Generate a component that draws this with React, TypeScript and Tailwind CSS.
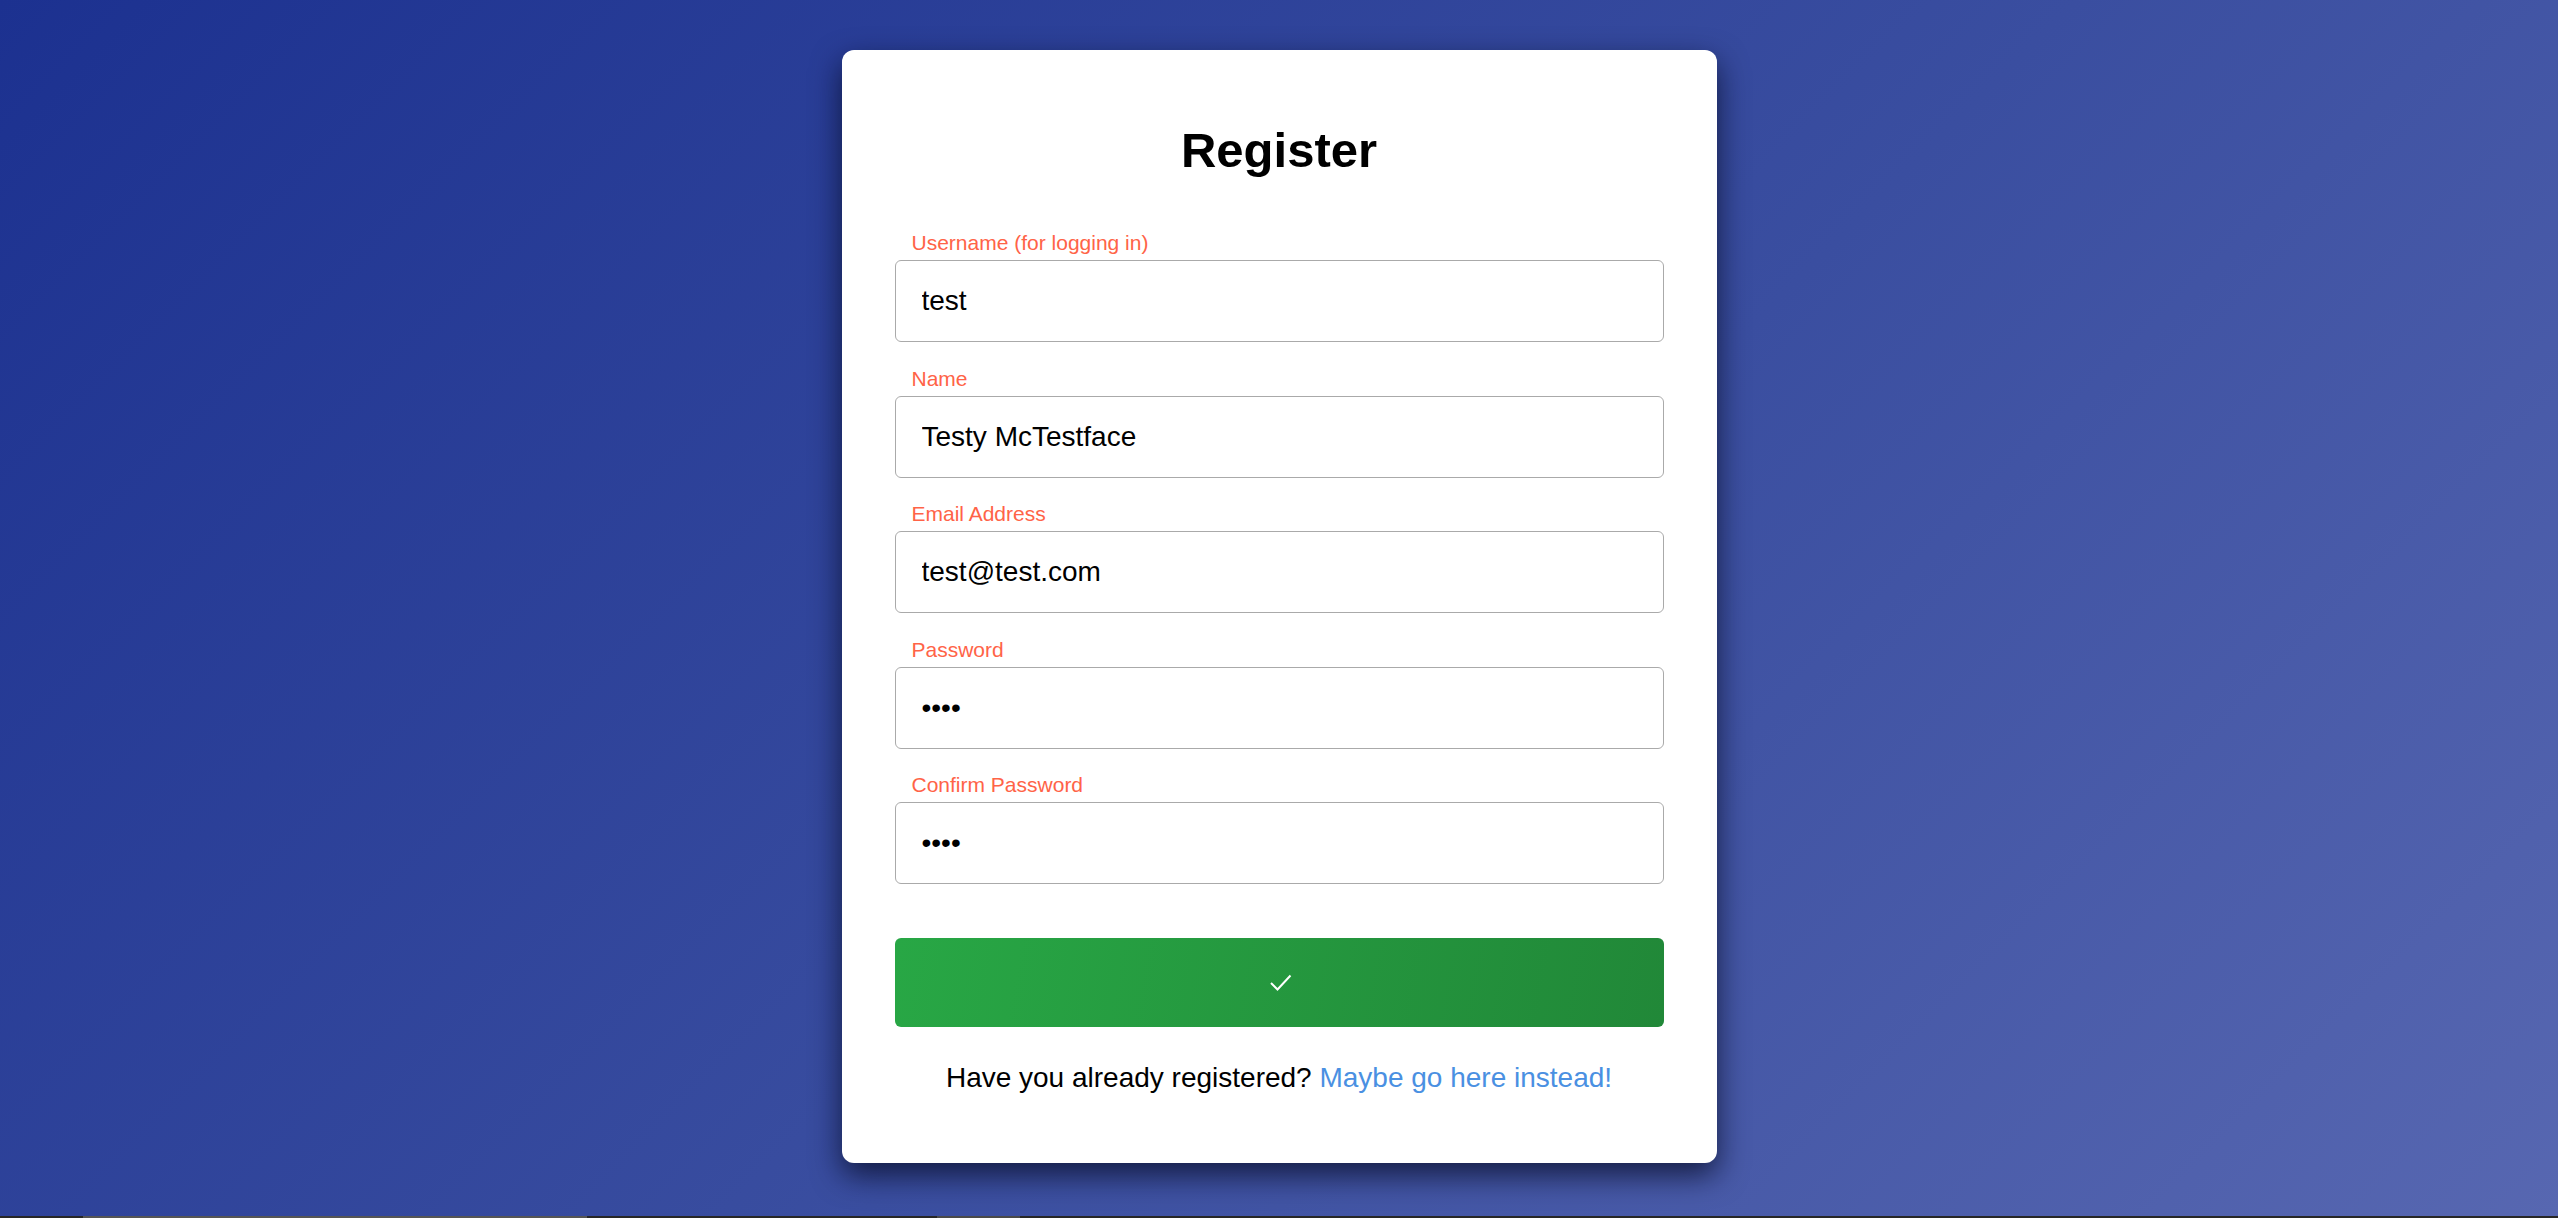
const fields = [
  { label: 'Username (for logging in)', type: 'text', value: 'test' },
  { label: 'Name', type: 'text', value: 'Testy McTestface' },
  { label: 'Email Address', type: 'email', value: 'test@test.com' },
  { label: 'Password', type: 'password', value: 'test' },
  { label: 'Confirm Password', type: 'password', value: 'test' },
];

export default function App() {
  return (
    <div className="h-[1218px] w-full flex flex-col items-center bg-[linear-gradient(135deg,#1c3190_0%,#3a4ea0_55%,#5767b1_100%)] font-['Liberation_Sans',Arial,sans-serif] overflow-hidden">
      <div className="mt-[50px] w-[875px] h-[1113px] bg-white rounded-[12px] shadow-[0_12px_30px_rgba(5,10,35,0.75)] px-[53px] pt-[72px]">
        <h1 className="text-[49px] leading-[56px] font-bold text-center text-black">Register</h1>

        <form className="mt-[53px] flex flex-col gap-[24.5px]" onSubmit={(e) => e.preventDefault()}>
          {fields.map((f) => (
            <div key={f.label} className="flex flex-col">
              <label className="pl-[17px] text-[21px] leading-[24px] text-[#ff6347]">{f.label}</label>
              <input
                type={f.type}
                defaultValue={f.value}
                className="mt-[5px] w-full h-[82px] border border-[#aaaaaa] rounded-[6px] px-[26px] text-[28px] text-black bg-white outline-none"
              />
            </div>
          ))}
        </form>

        <button
          type="button"
          className="mt-[54px] w-full h-[89px] rounded-[6px] bg-[linear-gradient(100deg,#28a745,#218838)] flex items-center justify-center"
        >
          <svg width="24" height="20" viewBox="0 0 24 20" fill="none" className="ml-[4px]">
            <polyline points="2,10 8.5,16.5 21.5,2.5" stroke="white" strokeWidth="2" />
          </svg>
        </button>

        <p className="mt-[35px] text-center text-[28px] leading-[32px] text-black">
          Have you already registered?{' '}
          <a href="#" className="text-[#4a90e2]">Maybe go here instead!</a>
        </p>
      </div>

      <div className="flex-1" />
      <div className="w-full h-[2px] flex bg-[#272727]">
        <div className="w-[83px]" />
        <div className="w-[504px] bg-[#555555]" />
        <div className="w-[350px]" />
        <div className="w-[83px] bg-[#4a4a4a]" />
      </div>
    </div>
  );
}
